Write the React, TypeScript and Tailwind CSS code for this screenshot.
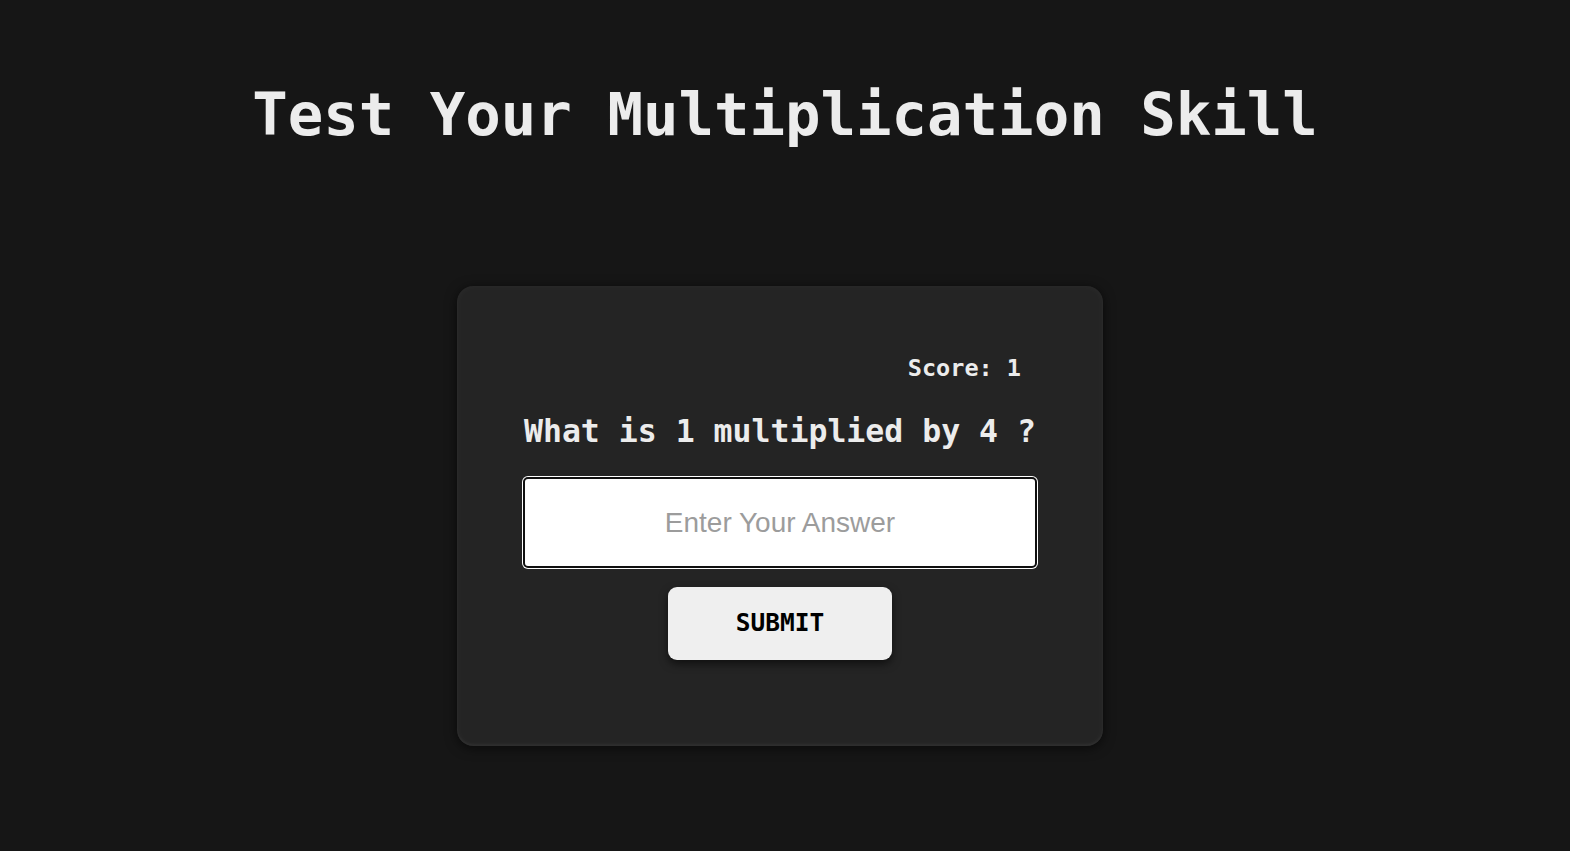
import React, { useState } from 'react';

const mono = 'font-["DejaVu_Sans_Mono","Liberation_Mono",monospace]';

export default function App() {
  const [answer, setAnswer] = useState('');
  const [score] = useState(1);

  return (
    <div className={`min-h-screen w-full bg-[#161616] flex flex-col items-center ${mono}`}>
      <h1 className="pt-[85px] text-[59px] leading-none font-bold text-[#ececec] tracking-normal">
        Test Your Multiplication Skill
      </h1>

      <div className="mt-[142px] mr-[10px] w-[646px] h-[460px] rounded-[16px] bg-[#242424] shadow-[0_2px_12px_rgba(0,0,0,0.6),inset_0_0_8px_rgba(255,255,255,0.04),inset_0_-2px_3px_rgba(255,255,255,0.04)] flex flex-col items-center pt-[71px]">
        <div className="self-end mr-[82px] text-[23.5px] leading-none font-bold text-[#ececec]">
          Score: {score}
        </div>

        <div className="mt-[35px] text-[31.5px] leading-none font-bold text-[#ececec]">
          What is 1 multiplied by 4 ?
        </div>

        <input
          autoFocus
          value={answer}
          onChange={(e) => setAnswer(e.target.value)}
          placeholder="Enter Your Answer"
          className='mt-[30px] w-[514px] h-[91px] bg-white rounded-[5px] border-2 border-[#101010] shadow-[0_0_0_1px_#ffffff] outline-none text-center text-[28px] text-black placeholder:text-[#9c9c9c] font-["Liberation_Sans",Arial,sans-serif]'
        />

        <button className="mt-[19px] w-[224px] h-[73px] rounded-[9px] bg-[#efefef] text-black text-[24.5px] font-bold shadow-[0_4px_8px_rgba(0,0,0,0.55)]">
          SUBMIT
        </button>
      </div>
    </div>
  );
}
